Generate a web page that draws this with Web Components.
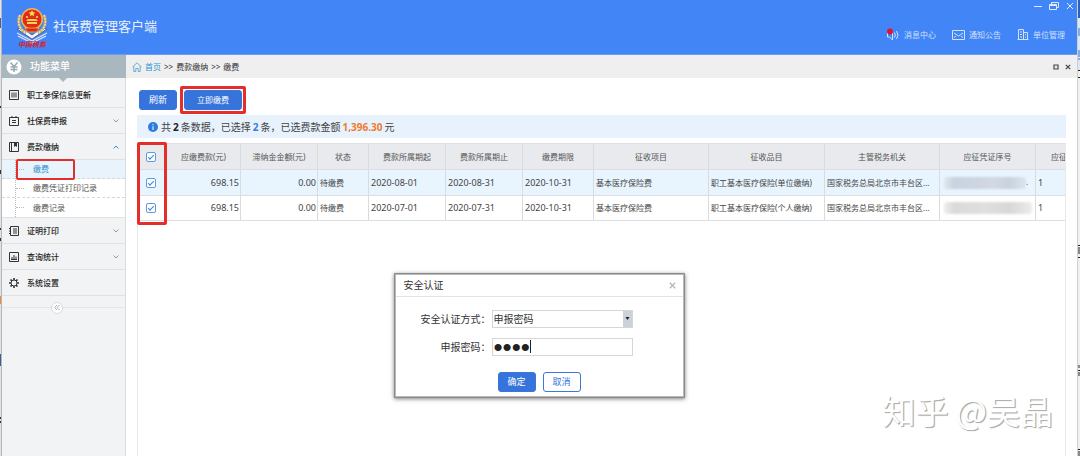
<!DOCTYPE html>
<html lang="zh-CN">
<head>
<meta charset="utf-8">
<title>社保费管理客户端</title>
<style>
  body { margin: 0; background: #f0f0f0; color: #444; font: 8px/12px "Noto Sans", "Noto Sans CJK SC", sans-serif; overflow: hidden; }
</style>
</head>
<body>
<client-window>
  <client-header slot="header" name="社保费管理客户端"></client-header>
  <side-menu slot="side"></side-menu>
  <crumb-bar slot="crumbs"></crumb-bar>
  <pay-page></pay-page>
</client-window>
<auth-dialog heading="安全认证"></auth-dialog>
<water-mark>知乎 @吴晶</water-mark>

<script>
class Base extends HTMLElement {
  connectedCallback() {
    if (this.shadowRoot) return;
    this.attachShadow({ mode: 'open' }).innerHTML =
      '<style>*{box-sizing:border-box}button,input,select{font:inherit}' + this.css() + '</style>' + this.html();
  }
}

customElements.define('client-window', class extends Base {
  css() { return `
    :host { display: grid; grid-template-columns: 2px 1fr 3px; min-height: 100vh; background: #fff; }
    .left { background: linear-gradient(#dfe6f2 0 18px, #3c66ab 18px 28px, #e2e2e2 28px); border-right: 1px solid #b5b8bb; position: relative; }
    .right { background: linear-gradient(#2b62bd 0 18px, #dbe7f7 18px 70px, #f0f0f0 70px); border-left: 1px solid #cfcfcf; position: relative; }
    .right svg, .left svg { display: block; }
    .body { display: grid; grid-template-columns: 124px 1fr; min-width: 0; grid-template-rows: auto auto 1fr; }
    .head { grid-column: 1 / 3; }
    .side { grid-row: 2 / 4; }
    main { min-width: 0; display: flex; flex-direction: column; }
    .head, .side, .crumbs { min-width: 0; display: grid; }
  `; }
  html() { return `
    <div class="left"><svg width="1" height="456"><path d="M.5 106v2M.5 170v4M.5 228v2M.5 238v3M.5 417v2M.5 421v2" stroke="#333"/><path d="M.5 296v8" stroke="#f08a3c"/><path d="M.5 354v12" stroke="#38608c"/></svg></div>
    <div class="body">
      <div class="head"><slot name="header"></slot></div>
      <div class="side"><slot name="side"></slot></div>
      <div class="crumbs"><slot name="crumbs"></slot></div>
      <main><slot></slot></main>
    </div>
    <div class="right"><svg width="2" height="456"><path d="M1 28v8M1 50v7M0 59h2" stroke="#2f72c8" stroke-width="1"/><path d="M0 70.500h2M0 77.500h2M0 245.500h2M1 247v7M0 257.500h2M1 365v3M0 370.500h2M1 372v4M0 449.500h2M1 451v5" stroke="#222"/></svg></div>
  `; }
});

customElements.define('tax-logo', class extends Base {
  css() { return `:host { display: block; width: 32px; height: 44px; } svg { display: block; }`; }
  html() { return `
    <svg width="32" height="44" viewBox="0 0 32 44" role="img" aria-label="中国税务">
      <path d="M1 22l5-1 10 7 10-7 5 1-15 10z" fill="#f4f6fb" stroke="#3b4f86" stroke-width=".8"/>
      <path d="M1 26l15 8 15-8M2 29l14 7 14-7" fill="none" stroke="#dfe7f7" stroke-width="1.200"/>
      <path d="M4 8c-3 7-1 14 6 18M28 8c3 7 1 14-6 18" fill="none" stroke="#b3a074" stroke-width="3"/>
      <path d="M4 8c-3 7-1 14 6 18M28 8c3 7 1 14-6 18" fill="none" stroke="#f3e3ac" stroke-width="1.500" stroke-dasharray="2 1"/>
      <circle cx="16" cy="12" r="11" fill="#efb64b"/>
      <circle cx="16" cy="12" r="9.500" fill="#df2a1c"/>
      <path d="M16 3l1 2.200 2.400.2-1.800 1.500.6 2.300L16 8l-2.200 1.200.6-2.300-1.800-1.500 2.400-.2z" fill="#ffe34a"/>
      <circle cx="11" cy="10" r="1" fill="#ffe34a"/><circle cx="21" cy="10" r="1" fill="#ffe34a"/>
      <path d="M10 14l2-2h8l2 2zM11 15h10v2H11z" fill="#ffd64a"/>
      <path d="M9 21h14l-2 4H11z" fill="#d62b1e" stroke="#efb64b" stroke-width=".8"/>
      <text x="16" y="40" text-anchor="middle" font-size="7" font-weight="bold" font-style="italic" fill="#d6202c">中国税务</text>
    </svg>`; }
});

customElements.define('client-header', class extends Base {
  css() { return `
    :host { display: flex; height: 55px; background: #4285f6; border-bottom: 1px solid #6a9df3; box-sizing: border-box; color: #fff; padding: 0 2px 0 14px; }
    tax-logo { margin-top: 7px; }
    h1 { margin: 18px 0 0 5px; font-size: 13px; line-height: 16px; font-weight: 400; flex: 1; white-space: nowrap; color: #eaf1fe; }
    .tools { display: flex; flex-direction: column; }
    .win { display: flex; justify-content: flex-end; gap: 6px; height: 12px; }
    .win button { display: block; border: 0; background: none; padding: 0; width: 10px; height: 12px; color: #dfeaff; }
    nav { display: flex; gap: 16px; margin: 16px 10px 0 0; }
    a { display: flex; align-items: center; gap: 4px; color: #d3e1fc; text-decoration: none; height: 13px; white-space: nowrap; }
    svg { display: block; fill: none; stroke: currentColor; }
  `; }
  html() { return `
    <tax-logo></tax-logo>
    <h1>${this.getAttribute('name')}</h1>
    <div class="tools">
      <div class="win">
        <button aria-label="最小化"><svg width="10" height="12"><path d="M1 6.500h8"/></svg></button>
        <button aria-label="还原"><svg width="10" height="12"><path d="M2.500 4.500v-2h7v5h-2M.5 4.500h7v5h-7zM.5 5.500h7"/></svg></button>
        <button aria-label="关闭"><svg width="10" height="12"><path d="M2 3l6 6M8 3l-6 6"/></svg></button>
      </div>
      <nav>
        <a href="#msg"><svg width="14" height="13"><path d="M1.500 5v4h2l3 3V2l-3 3zM8.500 4.500q1.500 2.500 0 5M10.500 3q3 4 0 8"/><circle cx="4" cy="3.500" r="3" fill="#e0142c" stroke="none"/></svg>消息中心</a>
        <a href="#notice"><svg width="13" height="10"><path d="M.5.5h12v9H.5zM2 3l4.500 3L11 3M2 7.500l2-1.500M11 7.500L9 6"/></svg>通知公告</a>
        <a href="#unit"><svg width="12" height="11"><path d="M.5 10.500h11M1.500 10V.5h5V10M6.500 3.500h4V10M3 3h2M3 5.500h2M3 8h2M8 5.500h1M8 8h1"/></svg>单位管理</a>
      </nav>
    </div>`; }
});

const GLYPHS = {
  card: '<path d="M.5.5h9v9h-9zM3 2.500v5M5 2.500v5M7 2.500v5"/>',
  note: '<path d="M.5 1.500h9v8h-9zM3 0v2M7 0v2M3 4.500h4M3 6.500h4"/>',
  book: '<path d="M.5.5h9v9h-9zM2.500.5v9"/><path d="M5 1h3v4L6.500 4 5 5z" fill="currentColor" stroke="none"/>',
  list: '<path d="M1.500.5h8v9h-8zM0 2.500h2M0 5h2M0 7.500h2M4 3h4M4 5h4M4 7h4"/>',
  chart: '<path d="M.5.5h9v9h-9zM3 5v3M5 3v5M7 4.500V8M2 7.500h6"/>',
  gear: '<circle cx="5" cy="5" r="3"/><path d="M5 0v2M5 8v2M0 5h2M8 5h2M1.500 1.500l1.400 1.400M7.100 7.100l1.400 1.400M8.500 1.500L7.100 2.900M2.900 7.100L1.500 8.500" stroke-width="1.600"/>'
};

customElements.define('menu-row', class extends Base {
  css() { return `
    :host { display: block; border-bottom: 1px solid #dfe1e3; }
    a { display: flex; align-items: center; height: 25px; padding: 0 6px 0 7px; gap: 8px; color: #222; font-weight: 500; text-decoration: none; white-space: nowrap; }
    span { flex: 1; }
    svg { display: block; fill: none; stroke: currentColor; overflow: visible; }
    .i { color: #333; }
    .c { color: #999; }
    .up { color: #3f87c9; }
  `; }
  html() {
    const s = this.getAttribute('state');
    const c = s === 'open' ? '<svg class="up" width="6" height="4"><path d="M.5 3.500L3 1l2.500 2.500"/></svg>'
      : s === 'closed' ? '<svg class="c" width="6" height="4"><path d="M.5.5L3 3 5.500.5"/></svg>' : '';
    return `<a href="#"><svg class="i" width="10" height="10">${GLYPHS[this.getAttribute('glyph')]}</svg><span><slot></slot></span>${c}</a>`;
  }
});

customElements.define('sub-menu', class extends Base {
  css() { return `
    :host { display: block; background: #fff; border-bottom: 1px solid #dfe1e3; position: relative; }
    a { display: flex; align-items: center; height: 19px; padding-left: 31px; color: #555; text-decoration: none; border-bottom: 1px dashed #d5d9dc; white-space: nowrap; }
    a:last-of-type { border-bottom: 0; }
    a.on { background: #e8f3fb; color: #2f8fd0; }
    a::before { content: ""; width: 8px; border-top: 1px dotted #bbb; margin: 0 9px 0 -17px; }
    .line { position: absolute; left: 13px; top: 0; bottom: 0; border-left: 1px dotted #bbb; }
    .mark { position: absolute; left: 14px; top: -1px; width: 59px; height: 21px; border: 2px solid #e32f2b; border-radius: 2px; }
  `; }
  html() { return `<a class="on" href="#pay">缴费</a><a href="#print">缴费凭证打印记录</a><a href="#log">缴费记录</a><div class="line"></div><div class="mark"></div>`; }
});

customElements.define('side-menu', class extends Base {
  css() { return `
    :host { display: block; background: #f2f3f4; border-right: 1px solid #dcdfe1; }
    h2 { margin: 0 -1px 4px 0; height: 23px; background: #a9b7bf; color: #fff; font-size: 10px; line-height: 23px; font-weight: 500; display: flex; align-items: center; gap: 8px; padding-left: 4px; position: relative; }
    h2::after { content: ""; position: absolute; left: 57px; top: 23px; border: 4px solid transparent; border-top-color: #a9b7bf; border-bottom: 0; }
    svg { display: block; }
    .fold { display: flex; align-items: center; justify-content: center; height: 23px; padding-right: 14px; background: linear-gradient(#e4e6e8, #e4e6e8) 0 11px / 100% 1px no-repeat; }
    .fold button { width: 12px; height: 12px; padding: 0; border: 1px solid #dadada; border-radius: 50%; background: #fff; display: grid; place-items: center; }
  `; }
  html() { return `
    <h2><svg width="16" height="16"><circle cx="8" cy="8" r="7.500" fill="#fff"/><path d="M4.500 3.500L8 7.500l3.500-4M8 7.500V13M4.500 8h7M4.500 10.500h7" fill="none" stroke="#97a9b3" stroke-width="1.500"/></svg>功能菜单</h2>
    <menu-row glyph="card">职工参保信息更新</menu-row>
    <menu-row glyph="note" state="closed">社保费申报</menu-row>
    <menu-row glyph="book" state="open">费款缴纳</menu-row>
    <sub-menu></sub-menu>
    <menu-row glyph="list" state="closed">证明打印</menu-row>
    <menu-row glyph="chart" state="closed">查询统计</menu-row>
    <menu-row glyph="gear">系统设置</menu-row>
    <div class="fold"><button aria-label="收起"><svg width="6" height="5"><path d="M3 0L.7 2.500 3 5M5.500 0L3.200 2.500 5.500 5" fill="none" stroke="#999" stroke-width=".8"/></svg></button></div>`; }
});

customElements.define('crumb-bar', class extends Base {
  css() { return `
    :host { display: flex; align-items: center; gap: 3px; height: 23px; padding: 0 6px; background: #efefef; color: #333; white-space: nowrap; }
    a { color: #2a93d4; text-decoration: none; }
    svg { display: block; fill: none; }
    .end { margin-left: auto; display: flex; gap: 6px; }
    button { border: 0; padding: 0; background: none; width: 6px; height: 6px; }
  `; }
  html() { return `
    <svg width="10" height="10" stroke="#6aaed6"><path d="M.5 5L5 .8 9.500 5M1.800 4v5.500h2V6.500h2.400v3h2V4"/></svg>
    <a href="#home">首页</a><span>&gt;&gt;</span><span>费款缴纳</span><span>&gt;&gt;</span><span>缴费</span>
    <div class="end"><button aria-label="最大化"><svg width="6" height="6"><path d="M1 1h4v4H1z" stroke="#444" stroke-width="1.200"/></svg></button>
    <button aria-label="关闭"><svg width="6" height="6"><path d="M.8.8l4.400 4.400M5.200.8L.8 5.200" stroke="#444" stroke-width="1.200"/></svg></button></div>`; }
});

customElements.define('action-button', class extends Base {
  css() { return `
    :host { display: block; position: relative; }
    button { display: block; width: 100%; height: 20px; padding: 0; border: 1px solid #3a77dc; border-radius: 3px; background: #3674dc; color: #fff; font-size: 9px; line-height: 18px; white-space: nowrap; }
    :host([plain]) button { background: #fff; color: #3674dc; }
    :host([marked]) button { font-size: 8px; }
    :host([marked])::after { content: ""; position: absolute; inset: -4px; border: 3px solid #e32f2b; border-radius: 2px; }
  `; }
  html() { return `<button type="button"><slot></slot></button>`; }
});

customElements.define('info-bar', class extends Base {
  css() { return `
    :host { display: flex; align-items: center; gap: 2px; height: 23px; padding-left: 11px; background: #e8f2fc; color: #444; font-size: 10px; line-height: 14px; white-space: nowrap; }
    svg { display: block; margin-right: 1px; }
    b { color: #222; } b.n { color: #3b7be4; } b.sum { color: #f07a2a; }
  `; }
  html() { return `<svg width="10" height="10"><circle cx="5" cy="5" r="5" fill="#2f7ae0"/><path d="M5 2v1.200M5 4.200V8" stroke="#fff"/></svg>
    <span>共</span><b>2</b><span>条数据，已选择</span><b class="n">2</b><span>条，已选费款金额</span><b class="sum">1,396.30</b><span>元</span>`; }
});

customElements.define('pay-table', class extends Base {
  css() { return `
    :host { display: block; position: relative; flex: 1; border: solid #e9e9e9; border-width: 0 1px; }
    .clip { overflow: hidden; }
    table { border-collapse: separate; border-spacing: 0; table-layout: fixed; width: 978px; }
    th, td { padding: 0 2px; border-right: 1px solid #d9dcdf; border-bottom: 1px solid #dcdfe1; white-space: nowrap; overflow: hidden; font-weight: 400; text-align: left; }
    th { height: 27px; background: #e9eaee; text-align: center; color: #555; border-top: 1px solid #e0e1e5; }
    td { height: 25px; }
    tr.on td { background: #e8f4fe; height: 26px; }
    td.m { text-align: right; padding-right: 1px; }
    td.m, td.d { font-size: 9px; }
    th.pick, td.pick { text-align: center; padding: 0; border-right-color: transparent; }
    th.last { text-align: left; padding-left: 15px; }
    input { appearance: none; display: block; width: 10px; height: 10px; margin: 0 0 0 8px; border: 1px solid #5b9be6; border-radius: 2px; background: #fff; }
    input::after { content: ""; display: block; width: 5px; height: 2px; margin: 2px 0 0 1px; border: solid #3b7fd6; border-width: 0 0 1px 1px; transform: rotate(-45deg); }
    .mask { display: inline-block; vertical-align: middle; width: 82px; height: 12px; margin-left: 2px; border-radius: 3px; background: linear-gradient(90deg, #e3e7ee, #c9d3e0 12%, #cdd5e1 40%, #d3d9e3 60%, #c8d2df 80%, #dde4ee); filter: blur(1px); }
    .mask.g { width: 88px; background: linear-gradient(90deg, #ededed, #dadada 12%, #dfdfdf 45%, #d8d8d8 75%, #ececec); }
    .mark { position: absolute; left: -1px; top: -1px; width: 30px; height: 83px; border: 3px solid #e32f2b; border-radius: 2px; }
  `; }
  html() {
    const widths = [29, 74, 77, 51, 77, 77, 71, 115, 116, 115, 96, 80];
    const heads = ['应缴费款(元)', '滞纳金金额(元)', '状态', '费款所属期起', '费款所属期止', '缴费期限', '征收项目', '征收品目', '主管税务机关', '应征凭证序号'];
    const row = (cls, from, to, item, mask, tail) => `<tr class="${cls}"><td class="pick"><input type="checkbox" checked aria-label="选择 ${from}"></td>
      <td class="m">698.15</td><td class="m">0.00</td><td>待缴费</td><td class="d">${from}</td><td class="d">${to}</td><td class="d">2020-10-31</td>
      <td>基本医疗保险费</td><td>职工基本医疗保险(${item})</td><td>国家税务总局北京市丰台区...</td><td><span class="${mask}"></span>${tail}</td><td class="d">1</td></tr>`;
    return `<div class="clip"><table><colgroup>${widths.map(w => `<col style="width:${w}px">`).join('')}</colgroup>
      <thead><tr><th class="pick"><input type="checkbox" checked aria-label="全选"></th>${heads.map(h => `<th>${h}</th>`).join('')}<th class="last">应征</th></tr></thead>
      <tbody>${row('on', '2020-08-01', '2020-08-31', '单位缴纳', 'mask', '.')}${row('', '2020-07-01', '2020-07-31', '个人缴纳', 'mask g', '')}</tbody></table></div><div class="mark"></div>`;
  }
});

customElements.define('pay-page', class extends Base {
  css() { return `
    :host { display: flex; flex-direction: column; flex: 1; padding: 12px 11px 0; }
    .bar { display: flex; gap: 7px; padding: 0 2px; margin-bottom: 5px; }
    .refresh { width: 38px; } .pay { width: 58px; }
    info-bar { margin-bottom: 5px; }
  `; }
  html() { return `<div class="bar"><action-button class="refresh">刷新</action-button><action-button class="pay" marked>立即缴费</action-button></div>
    <info-bar></info-bar><pay-table></pay-table>`; }
});

customElements.define('auth-dialog', class extends Base {
  css() { return `
    :host { position: absolute; inset: 0; display: flex; justify-content: center; align-items: flex-start; padding: 273px 2px 0 0; box-sizing: border-box; pointer-events: none; }
    section { width: 291px; background: #fff; border: 1px solid #8c8c8c; outline: 1px solid #b8b8b8; outline-offset: -2px; box-shadow: 0 1px 4px rgba(0,0,0,.5); font-size: 10px; line-height: 14px; color: #333; pointer-events: auto; }
    header { display: flex; align-items: center; justify-content: space-between; height: 23px; padding: 0 7px 0 8px; margin: 0 1px; border-bottom: 1px solid #e3e3e3; }
    header button { border: 0; padding: 0; background: none; width: 7px; height: 7px; }
    svg { display: block; }
    form { display: grid; grid-template-columns: 92px 141px; gap: 10px 5px; padding: 13px 0 16px; align-items: center; }
    label { text-align: right; white-space: nowrap; margin-right: -4px; }
    .box { position: relative; height: 18px; border: 1px solid #d4d7da; display: flex; }
    select { appearance: none; border: 0; background: none; width: 100%; padding: 0 1px; color: #333; line-height: 16px; outline: 0; }
    .arrow { position: absolute; right: 0; top: 0; width: 9px; height: 16px; background: #cdd2da; pointer-events: none; }
    input { border: 0; width: 100%; padding: 0 1px; background: none; outline: 0; color: #222; font: 26px/16px "Liberation Sans", sans-serif; height: 16px; }
    .caret { position: absolute; left: 37px; top: 1px; width: 1px; height: 13px; background: #222; }
    footer { display: flex; gap: 7px; padding: 0 0 5px 103px; }
    action-button { width: 38px; }
  `; }
  html() { return `<section role="dialog" aria-labelledby="t"><header><span id="t">${this.getAttribute('heading')}</span>
    <button aria-label="关闭"><svg width="7" height="7"><path d="M.8.8l5.400 5.400M6.200.8L.8 6.200" stroke="#b5b5b5" stroke-width="1.300"/></svg></button></header>
    <form><label for="way">安全认证方式：</label><div class="box"><select id="way"><option>申报密码</option></select><svg class="arrow" viewBox="0 0 9 16"><path d="M2.500 6h4L4.500 9z" fill="#222"/></svg></div>
    <label for="pwd">申报密码：</label><div class="box"><input id="pwd" type="password" value="1234" autocomplete="off"><i class="caret"></i></div></form>
    <footer><action-button>确定</action-button><action-button plain>取消</action-button></footer></section>`; }
});

customElements.define('water-mark', class extends Base {
  css() { return `:host { position: absolute; right: 27px; bottom: 26px; font-size: 33px; line-height: 40px; color: #fff; font-family: "Noto Sans CJK SC", sans-serif; text-shadow: 1px 1px 0 #b0b0b0, 1px 1px 1px #aaa; white-space: nowrap; pointer-events: none; }`; }
  html() { return `<slot></slot>`; }
});
</script>
</body>
</html>
